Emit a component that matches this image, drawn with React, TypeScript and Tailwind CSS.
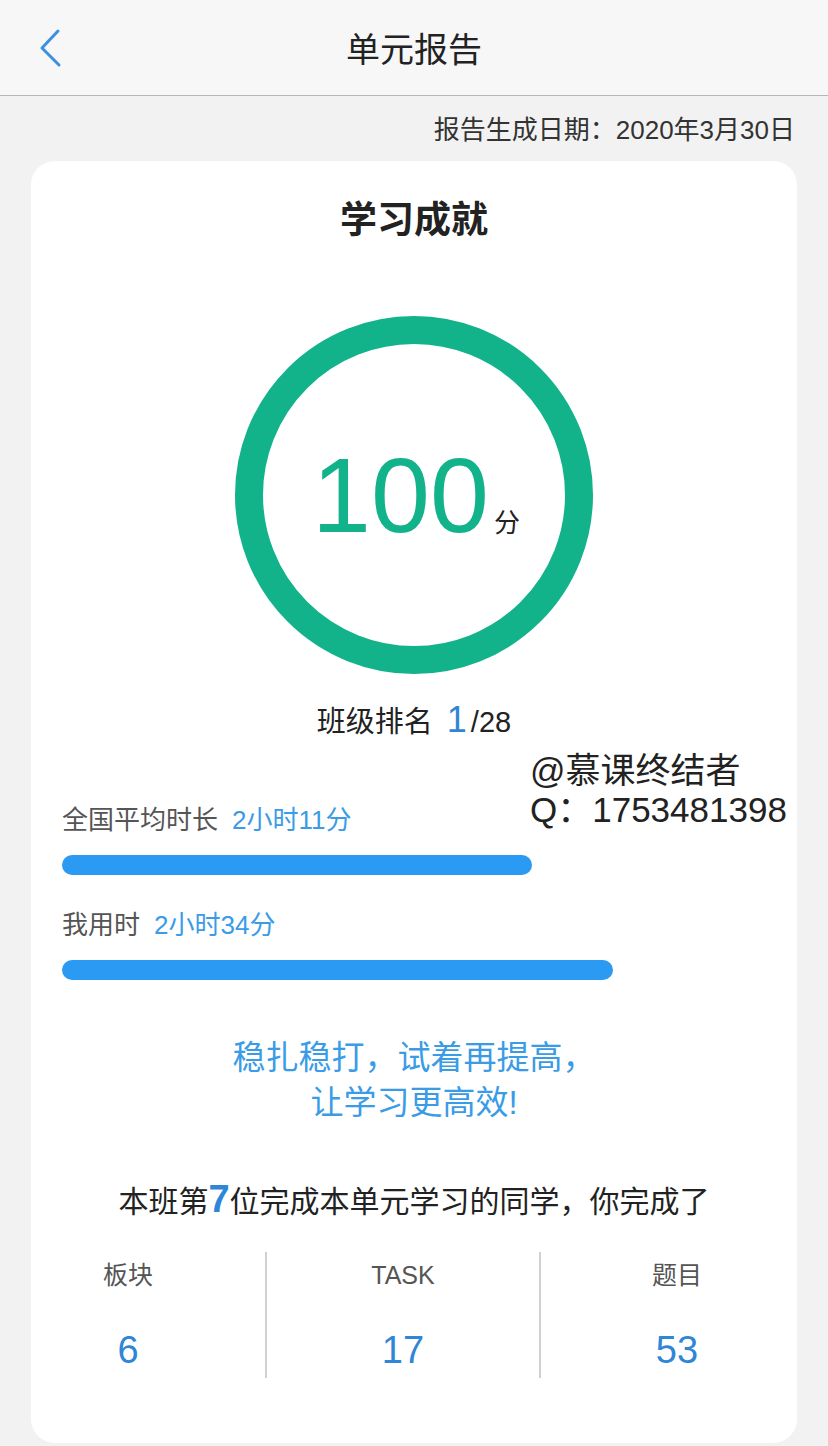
import React from "react";

const font = { fontFamily: '"Liberation Sans", "Noto Sans CJK SC", sans-serif' };

const Bar = ({ label, value, width }: { label: string; value: string; width: number }) => (
  <div>
    <div className="flex items-baseline gap-[14px] text-[26px] leading-[30px]">
      <span className="text-[#555]">{label}</span>
      <span className="text-[#3a9be6]">{value}</span>
    </div>
    <div className="mt-[20px] h-[20px] rounded-full bg-[#2b9af3]" style={{ width }} />
  </div>
);

const Stat = ({ label, value, divider }: { label: string; value: string; divider?: boolean }) => (
  <div className={`flex w-[274px] flex-col items-center ${divider ? "border-l-2 border-[#d0d0d0]" : ""}`}>
    <div className="mt-[8px] text-[25px] leading-[30px] text-[#555]">{label}</div>
    <div className="mt-[38px] text-[38px] leading-[44px] text-[#2f86d6]">{value}</div>
  </div>
);

export default function App() {
  return (
    <div className="min-h-[1446px] w-[828px] bg-[#f2f2f2]" style={font}>
      <header className="grid h-[96px] grid-cols-[1fr_auto_1fr] items-center border-b border-[#b5b5b5] bg-[#f7f7f7]">
        <div className="pl-[38px]">
          <svg width="26" height="40" viewBox="0 0 26 40" fill="none">
            <path d="M20 3 L4 20 L21 37" stroke="#3d8fe0" strokeWidth="3" strokeLinecap="round" strokeLinejoin="round" />
          </svg>
        </div>
        <h1 className="mt-[4px] text-[34px] leading-[40px] text-[#222]">单元报告</h1>
        <div />
      </header>

      <div className="mt-[19px] pr-[33px] text-right text-[26px] leading-[30px] text-[#333]">
        报告生成日期：2020年3月30日
      </div>

      <section className="relative mx-[31px] mt-[16px] rounded-[24px] bg-white px-[31px] pb-[65px] pt-[39px]">
        <h2 className="text-center text-[37px] font-bold leading-[41px] text-[#222]">学习成就</h2>

        <div className="mx-auto mt-[75px] flex h-[358px] w-[358px] items-center justify-center rounded-full border-[28px] border-[#12b38a]">
          <div className="flex items-baseline pl-[4px]">
            <span className="text-[106px] leading-none text-[#12b38a]">100</span>
            <span className="ml-[5px] text-[26px] leading-none text-[#222]">分</span>
          </div>
        </div>

        <div className="mt-[29px] flex h-[34px] items-baseline justify-center text-[29px] leading-[34px] text-[#222]">
          <span>班级排名</span>
          <span className="ml-[14px] text-[36px] text-[#2f86d6]">1</span>
          <span className="ml-[4px]">/28</span>
        </div>

        <div className="absolute left-[499px] top-[590px] text-[35px] leading-[39px] text-[#222]">
          <div>@慕课终结者</div>
          <div>Q：1753481398</div>
        </div>

        <div className="mt-[68px]">
          <Bar label="全国平均时长" value="2小时11分" width={470} />
        </div>
        <div className="mt-[35px]">
          <Bar label="我用时" value="2小时34分" width={551} />
        </div>

        <div className="mt-[55px] text-center text-[33px] leading-[45px] text-[#3a9be6]">
          <div>稳扎稳打，试着再提高，</div>
          <div>让学习更高效!</div>
        </div>

        <div className="mt-[54px] flex h-[40px] items-baseline justify-center text-[30px] leading-[40px] text-[#222]">
          <span>本班第</span>
          <span className="text-[38px] font-bold text-[#2f86d6]">7</span>
          <span>位完成本单元学习的同学，你完成了</span>
        </div>

        <div className="-ml-[71px] mt-[33px] flex h-[126px] w-[822px]">
          <Stat label="板块" value="6" />
          <Stat label="TASK" value="17" divider />
          <Stat label="题目" value="53" divider />
        </div>
      </section>
    </div>
  );
}
